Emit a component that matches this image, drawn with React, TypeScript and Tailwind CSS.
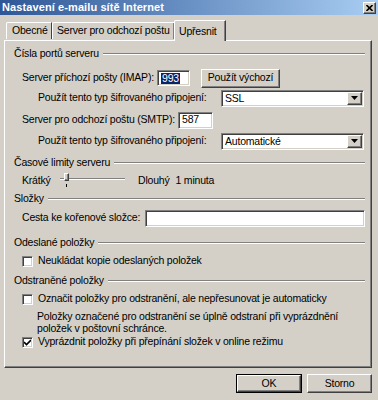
import React from "react";

const raised =
  "bg-[#d4d0c8] border border-t-white border-l-white border-r-[#404040] border-b-[#404040] shadow-[inset_-1px_-1px_0_#808080]";
const sunken =
  "bg-white border border-t-[#808080] border-l-[#808080] border-r-white border-b-white shadow-[inset_1px_1px_0_#404040,inset_-1px_-1px_0_#d4d0c8]";

function Header({ title, mt }: { title: string; mt: string }) {
  return (
    <div className={`flex items-center h-[16px] pl-[9px] pr-[6px] ${mt}`}>
      <span className="whitespace-nowrap">{title}</span>
      <div className="flex-1 ml-[4px] h-[2px] border-t border-t-[#808080] border-b border-b-white" />
    </div>
  );
}

function Arrow() {
  return (
    <div className={`${raised} w-[15px] h-[13px] flex items-center justify-center`}>
      <svg width="7" height="4" viewBox="0 0 7 4">
        <polygon points="0,0 7,0 3.5,4" fill="#000" />
      </svg>
    </div>
  );
}

function Select({ value }: { value: string }) {
  return (
    <div className={`${sunken} w-[143px] h-[17px] flex items-center pl-[3px] pr-[1px]`}>
      <span className="flex-1 leading-none">{value}</span>
      <Arrow />
    </div>
  );
}

function Check({ checked }: { checked?: boolean }) {
  return (
    <div className={`${sunken} w-[11px] h-[11px] flex items-center justify-center shrink-0`}>
      {checked && (
        <svg width="7" height="7" viewBox="0 0 7 7">
          <path d="M0 3 L2.5 5.5 L7 1" stroke="#000" strokeWidth="1.6" fill="none" />
        </svg>
      )}
    </div>
  );
}

export default function App() {
  return (
    <div className="w-[378px] h-[400px] bg-[#d4d0c8] flex flex-col font-['Liberation_Sans',Arial,sans-serif] text-[10.5px] tracking-[-0.2px] text-black overflow-hidden">
      {/* title bar */}
      <div className="h-[15px] flex items-center bg-gradient-to-r from-[#2f5796] to-[#a9cdf2]">
        <span className="pl-[2px] text-white font-bold text-[11px] tracking-[0.1px] leading-none">
          Nastavení e-mailu sítě Internet
        </span>
        <div className={`${raised} ml-auto mr-[2px] w-[13px] h-[12px] flex items-center justify-center`}>
          <svg width="7" height="6" viewBox="0 0 7 6">
            <path d="M0.5 0 L6.5 6 M6.5 0 L0.5 6" stroke="#000" strokeWidth="1.6" />
          </svg>
        </div>
      </div>

      {/* tabs */}
      <div className="h-[25px] flex items-end pl-[6px] relative z-10 whitespace-nowrap">
        <div className="w-[46px] h-[17px] border-t border-l border-t-white border-l-white border-r border-r-[#404040] rounded-tl-[2px] flex items-center pl-[5px] mb-[1px]">
          Obecné
        </div>
        <div className="w-[123px] h-[17px] border-t border-l border-t-white border-l-white border-r border-r-[#404040] shadow-[inset_-1px_0_0_#808080] rounded-tl-[2px] flex items-center pl-[4px] mb-[1px]">
          Server pro odchozí poštu
        </div>
        <div className="w-[52px] h-[21px] border-t border-l border-t-white border-l-white border-r border-r-[#404040] shadow-[inset_-1px_0_0_#808080] bg-[#d4d0c8] rounded-tl-[2px] flex items-start pt-[3px] pl-[4px] mb-[-1px] ml-[-1px]">
          Upřesnit
        </div>
      </div>

      {/* panel */}
      <div className="mx-[4px] mr-[6px] h-[328px] border border-t-white border-l-white border-r-[#404040] border-b-[#404040] shadow-[inset_-1px_-1px_0_#808080] flex flex-col whitespace-nowrap">
        <Header title="Čísla portů serveru" mt="mt-[5px]" />

        <div className="flex items-center h-[20px] pl-[17px] mt-[6px]">
          <span className="w-[135px]">Server příchozí pošty (IMAP):</span>
          <div className={`${sunken} w-[33px] h-[16px] flex items-center pl-[3px]`}>
            <span className="bg-[#0a246a] text-white leading-[11px] px-[1px]">993</span>
          </div>
          <div className={`${raised} ml-[11px] w-[79px] h-[19px] flex items-center justify-center`}>
            Použít výchozí
          </div>
        </div>

        <div className="flex items-center h-[20px] pl-[33px]">
          <span className="w-[183px]">Použít tento typ šifrovaného připojení:</span>
          <Select value="SSL" />
        </div>

        <div className="flex items-center h-[20px] pl-[17px] mt-[2px]">
          <span className="w-[156px]">Server pro odchozí poštu (SMTP):</span>
          <div className={`${sunken} w-[35px] h-[17px] flex items-center pl-[3px]`}>587</div>
        </div>

        <div className="flex items-center h-[20px] pl-[33px] mt-[1px]">
          <span className="w-[183px]">Použít tento typ šifrovaného připojení:</span>
          <Select value="Automatické" />
        </div>

        <Header title="Časové limity serveru" mt="mt-[4px]" />

        <div className="flex items-center h-[16px] pl-[17px] mt-[2px]">
          <span className="w-[38px]">Krátký</span>
          <div className="relative w-[65px] h-[16px] flex items-center">
            <div className="w-full h-[2px] border-t border-t-[#808080] border-b border-b-white mt-[-5px]" />
            <div className={`${raised} absolute left-[4px] top-[0px] w-[5px] h-[8px]`} />
            <div className="absolute left-[6px] top-[11px] w-[1px] h-[3px] bg-black" />
          </div>
          <span className="ml-[13px]">Dlouhý</span>
          <span className="ml-[6px]">1 minuta</span>
        </div>

        <Header title="Složky" mt="mt-[2px]" />

        <div className="flex items-center h-[20px] pl-[17px] mt-[1px]">
          <span className="w-[123px]">Cesta ke kořenové složce:</span>
          <div className={`${sunken} w-[220px] h-[17px]`} />
        </div>

        <Header title="Odeslané položky" mt="mt-[7px]" />

        <div className="flex items-center h-[16px] pl-[17px] mt-[2px]">
          <Check />
          <span className="ml-[5px]">Neukládat kopie odeslaných položek</span>
        </div>

        <Header title="Odstraněné položky" mt="mt-[4px]" />

        <div className="flex items-center h-[16px] pl-[17px] mt-[2px]">
          <Check />
          <span className="ml-[5px]">Označit položky pro odstranění, ale nepřesunovat je automaticky</span>
        </div>

        <div className="pl-[32px] mt-[3px] leading-[12px]">
          <div>Položky označené pro odstranění se úplně odstraní při vyprázdnění</div>
          <div>položek v poštovní schránce.</div>
        </div>

        <div className="flex items-center h-[16px] pl-[17px]">
          <Check checked />
          <span className="ml-[5px]">Vyprázdnit položky při přepínání složek v online režimu</span>
        </div>
      </div>

      {/* buttons */}
      <div className="flex justify-end gap-[5px] pr-[6px] mt-[6px]">
        <div className="w-[66px] h-[19px] border border-black">
          <div className={`${raised} w-full h-full flex items-center justify-center`}>OK</div>
        </div>
        <div className={`${raised} w-[65px] h-[19px] flex items-center justify-center`}>Storno</div>
      </div>
    </div>
  );
}
